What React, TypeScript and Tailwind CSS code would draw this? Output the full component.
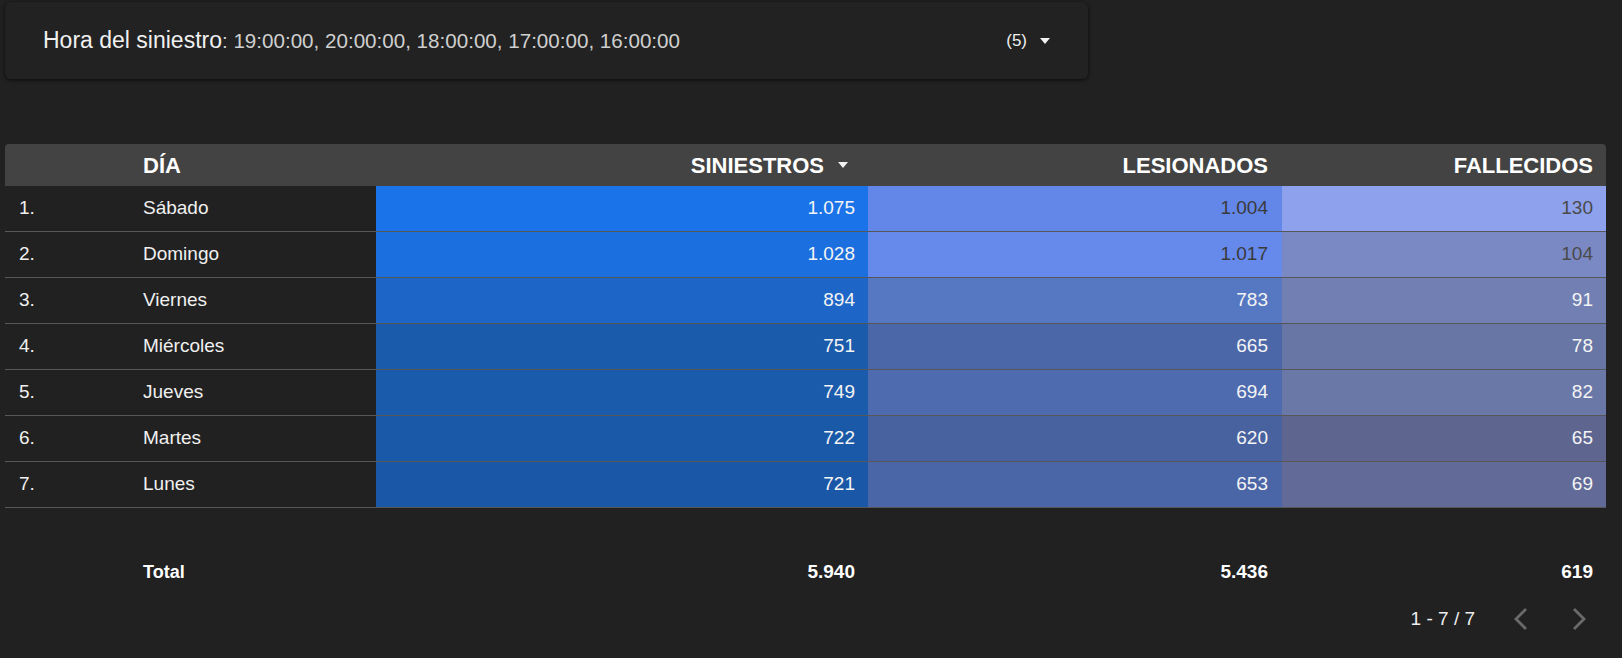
const rows = [
  { n: 1, dia: "Sábado", s: "1.075", l: "1.004", f: "130", sBg: "bg-[#1a73e8]", lBg: "bg-[#6387e8]", fBg: "bg-[#8ea1ec]", lDark: true, fDark: true },
  { n: 2, dia: "Domingo", s: "1.028", l: "1.017", f: "104", sBg: "bg-[#1b6fde]", lBg: "bg-[#6689ec]", fBg: "bg-[#7a89c4]", lDark: true, fDark: true },
  { n: 3, dia: "Viernes", s: "894", l: "783", f: "91", sBg: "bg-[#1d66c8]", lBg: "bg-[#5677c2]", fBg: "bg-[#717fb2]", lDark: false, fDark: false },
  { n: 4, dia: "Miércoles", s: "751", l: "665", f: "78", sBg: "bg-[#1b5bac]", lBg: "bg-[#4b67a8]", fBg: "bg-[#6876a5]", lDark: false, fDark: false },
  { n: 5, dia: "Jueves", s: "749", l: "694", f: "82", sBg: "bg-[#1b5bab]", lBg: "bg-[#4f6baf]", fBg: "bg-[#6a78a8]", lDark: false, fDark: false },
  { n: 6, dia: "Martes", s: "722", l: "620", f: "65", sBg: "bg-[#1a59a8]", lBg: "bg-[#48629f]", fBg: "bg-[#5e6690]", lDark: false, fDark: false },
  { n: 7, dia: "Lunes", s: "721", l: "653", f: "69", sBg: "bg-[#1a58a7]", lBg: "bg-[#4b66a6]", fBg: "bg-[#626b97]", lDark: false, fDark: false },
];

function Caret() {
  return (
    <svg width="10" height="6" viewBox="0 0 10 6">
      <path d="M0 0 L10 0 L5 6 Z" fill="#f2f2f2" />
    </svg>
  );
}

function Chevron({ dir }: { dir: "left" | "right" }) {
  return (
    <svg width="15" height="24" viewBox="0 0 15 24">
      <path
        d={dir === "left" ? "M13 2 L3 12 L13 22" : "M2 2 L12 12 L2 22"}
        fill="none"
        stroke="#6a6a6a"
        strokeWidth="2.8"
      />
    </svg>
  );
}

const grid = "grid grid-cols-[138px_233px_492px_414px_1fr]";

export default function App() {
  return (
    <div className="w-[1622px] h-[658px] bg-[#212121] text-white font-['Liberation_Sans',Arial,sans-serif] overflow-hidden">
      {/* filter chip */}
      <div className="ml-[5px] mt-[2px] w-[1083px] h-[77px] bg-[#222222] rounded-md shadow-[0_1px_4px_rgba(0,0,0,0.7)] flex items-center pl-[38px] pr-[38px]">
        <div className="flex-1 leading-none whitespace-nowrap flex items-baseline">
          <span className="text-[23px] text-[#f0f0f0]">Hora del siniestro</span>
          <span className="text-[20.6px] text-[#cfcfcf]">: 19:00:00, 20:00:00, 18:00:00, 17:00:00, 16:00:00</span>
        </div>
        <span className="text-[17px] text-[#f0f0f0]">(5)</span>
        <span className="ml-[13px] flex items-center"><Caret /></span>
      </div>

      {/* table */}
      <div className="ml-[5px] mt-[65px] w-[1601px]">
        <div className={`${grid} h-[42px] bg-[#434343] rounded-t-[4px] items-center text-[22px] font-bold text-white`}>
          <div />
          <div>DÍA</div>
          <div className="flex justify-end items-center gap-[14px] pr-[20px]">
            <span>SINIESTROS</span>
            <Caret />
          </div>
          <div className="text-right pr-[14px]">LESIONADOS</div>
          <div className="text-right pr-[13px]">FALLECIDOS</div>
        </div>
        {rows.map((r) => (
          <div key={r.n} className={`${grid} h-[46px] border-b border-[#575757] text-[19px]`}>
            <div className="flex items-center pl-[14px] text-[#f0f0f0]">{r.n}.</div>
            <div className="flex items-center text-[#f0f0f0]">{r.dia}</div>
            <div className={`${r.sBg} flex items-center justify-end pr-[13px] text-[#f4f4f4]`}>{r.s}</div>
            <div className={`${r.lBg} flex items-center justify-end pr-[14px] ${r.lDark ? "text-[#3a3a3a]" : "text-[#f4f4f4]"}`}>{r.l}</div>
            <div className={`${r.fBg} flex items-center justify-end pr-[13px] ${r.fDark ? "text-[#4a4a4a]" : "text-[#f4f4f4]"}`}>{r.f}</div>
          </div>
        ))}

        <div className={`${grid} h-[46px] mt-[41px] items-center text-[19px] font-bold text-white`}>
          <div />
          <div className="text-[18px]">Total</div>
          <div className="text-right pr-[13px]">5.940</div>
          <div className="text-right pr-[14px]">5.436</div>
          <div className="text-right pr-[13px]">619</div>
        </div>
      </div>

      <div className="flex justify-end items-center h-[30px] mt-[9px] pr-[35px]">
        <span className="text-[19px] text-[#eeeeee]">1 - 7 / 7</span>
        <span className="ml-[38px] flex"><Chevron dir="left" /></span>
        <span className="ml-[44px] flex"><Chevron dir="right" /></span>
      </div>
    </div>
  );
}
